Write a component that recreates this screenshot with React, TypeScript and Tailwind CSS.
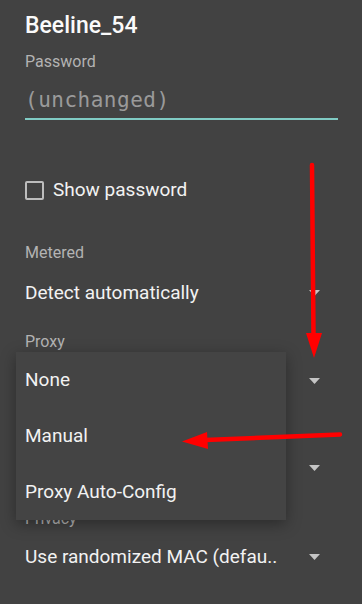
import React from 'react';

function Caret() {
  return (
    <svg width="11" height="6" viewBox="0 0 11 6" className="shrink-0">
      <path d="M0 0 L11 0 L5.5 6 Z" fill="#c4c4c4" />
    </svg>
  );
}

function Label({ text, className = '' }: { text: string; className?: string }) {
  return (
    <div className={`h-[20px] flex items-center text-[16px] text-[#b3b3b3] ${className}`}>
      {text}
    </div>
  );
}

// value is left empty where the popup menu covers the row
function Spinner({ value = '', className = '' }: { value?: string; className?: string }) {
  return (
    <div className={`h-[40px] flex items-center justify-between pr-[18px] ${className}`}>
      <span className="text-[19px] text-[#f2f2f2]">{value}</span>
      <Caret />
    </div>
  );
}

function Annotations() {
  return (
    <svg
      className="absolute inset-0 pointer-events-none"
      width="362"
      height="604"
      viewBox="0 0 362 604"
    >
      <line x1="312" y1="165" x2="313.5" y2="336" stroke="#ff0000" strokeWidth="4.5" strokeLinecap="round" />
      <path d="M306 333 L322 333 L314 358 Z" fill="#ff0000" />
      <line x1="340" y1="434.5" x2="205" y2="440" stroke="#ff0000" strokeWidth="4.5" strokeLinecap="round" />
      <path d="M207 432 L208 449 L182 441.5 Z" fill="#ff0000" />
    </svg>
  );
}

export default function App() {
  return (
    <div
      className="relative w-[362px] h-[604px] overflow-hidden bg-[#424242] text-white"
      style={{ fontFamily: 'Roboto, "Noto Sans", sans-serif' }}
    >
      <div className="flex flex-col pl-[25px] pr-[24px]">
        <div className="h-[50px] flex items-center pt-[2px] text-[23px] font-medium text-[#fafafa]">
          Beeline_54
        </div>
        <Label text="Password" className="mt-[2px]" />
        <div className="mt-[8px] h-[40px] flex items-center pt-[3px] border-b-2 border-[#80cbc4]">
          <span
            className="text-[21px] text-[#9a9a9a] tracking-[0.5px]"
            style={{ fontFamily: '"DejaVu Sans Mono", monospace' }}
          >
            (unchanged)
          </span>
        </div>
        <div className="mt-[50px] h-[40px] flex items-center gap-[9px]">
          <div className="w-[19px] h-[19px] rounded-[2px] border-2 border-[#bdbdbd]" />
          <span className="text-[19px] text-[#f2f2f2]">Show password</span>
        </div>
        <Label text="Metered" className="mt-[33px]" />
        <Spinner value="Detect automatically" className="mt-[10px]" />
        <Label text="Proxy" className="mt-[19px]" />
        <Spinner className="mt-[9px]" />
        <div className="h-[20px] mt-[18px]" />
        <Spinner className="mt-[9px]" />
        <Label text="Privacy" className="mt-[21px]" />
        <Spinner value="Use randomized MAC (defau.." className="mt-[8px]" />
      </div>

      <div className="absolute left-[16px] top-[352px] w-[270px] flex flex-col bg-[#444444] shadow-[0_4px_14px_rgba(0,0,0,0.35)]">
        {['None', 'Manual', 'Proxy Auto-Config'].map((item) => (
          <div key={item} className="h-[56px] flex items-center pl-[9px] text-[19px] text-[#f2f2f2]">
            {item}
          </div>
        ))}
      </div>

      <Annotations />
    </div>
  );
}
